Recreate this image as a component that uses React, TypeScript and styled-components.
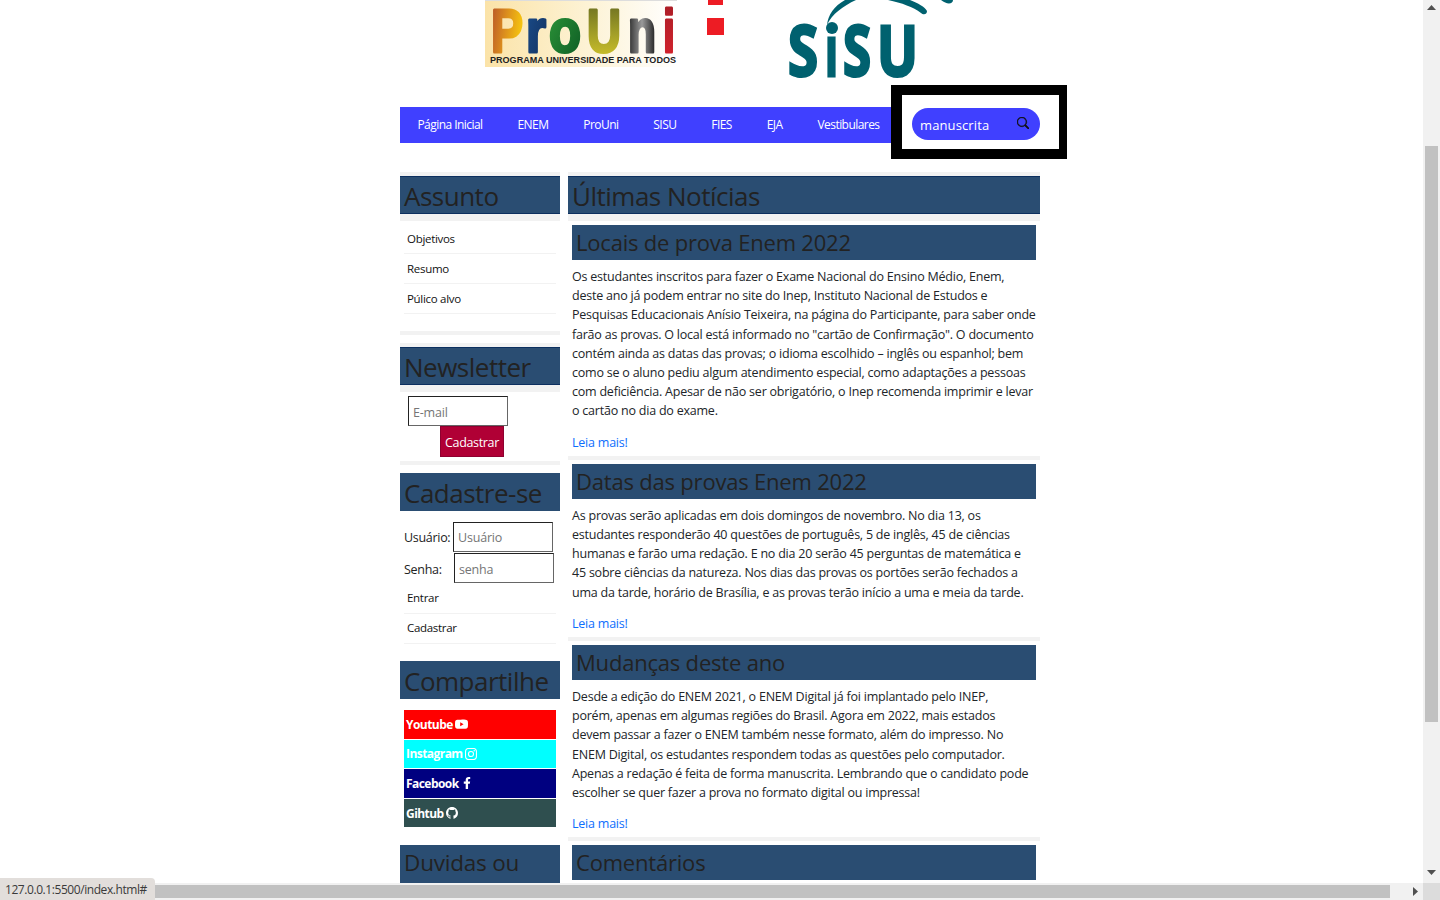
import React from 'react';
import styled, {createGlobalStyle} from 'styled-components';
import {BsGithub, BsInstagram, BsSearch, BsYoutube} from 'react-icons/bs';
import {FaFacebookF} from 'react-icons/fa';

const FONT = '"Open Sans", "Noto Sans", sans-serif';
const STRIP = '#f2f2f2';

const GlobalStyle = createGlobalStyle`
  html, body {
    margin: 0;
    height: 100%;
    overflow: hidden;
    background: #fff;
  }
  * {
    box-sizing: border-box;
  }
`;

const Viewport = styled.div`
  position: relative;
  width: 1440px;
  height: 900px;
  overflow: hidden;
  font-family: ${FONT};
  color: #212529;
`;

const Page = styled.div`
  width: 640px;
  margin-left: 400px;
`;

const LogoRow = styled.div`
  display: flex;
  align-items: flex-start;
  height: 85px;
  padding-left: 85px;
`;

const RedMarks = styled.svg`
  margin-left: 29px;
  flex: none;
`;

const SisuLogo = styled.svg`
  margin-left: 64px;
  flex: none;
`;

const NavRow = styled.div`
  display: flex;
  align-items: flex-start;
  height: 74px;
  margin-bottom: 13px;
`;

const NavBar = styled.nav`
  display: flex;
  flex: none;
  width: 491px;
  height: 36px;
  margin-top: 22px;
  background: #4040ff;
`;

const NavLink = styled.a`
  padding: 0 17.45px;
  font-size: 12px;
  line-height: 36px;
  letter-spacing: -0.55px;
  color: #fff;
  white-space: nowrap;
`;

const SearchFrame = styled.div`
  flex: none;
  width: 176px;
  height: 74px;
  padding: 13px 0 0 10px;
  border: solid #000;
  border-width: 10px 8px 10px 11px;
  background: #fff;
`;

const SearchPill = styled.div`
  display: flex;
  align-items: center;
  width: 128px;
  height: 32px;
  padding: 0 10px 0 8px;
  border-radius: 16px;
  background: #4040ff;
  color: #111;
  svg {
    margin: -3px 0 0 5px;
    stroke: currentColor;
    stroke-width: 0.7;
  }
`;

const SearchInput = styled.input`
  width: 92px;
  padding: 2px 0 0;
  border: 0;
  outline: 0;
  background: transparent;
  font-family: ${FONT};
  font-size: 13px;
  letter-spacing: 0.12px;
  color: #fff;
`;

const Columns = styled.div`
  display: grid;
  grid-template-columns: 160px 472px;
  gap: 8px;
  align-items: start;
`;

const Strip = styled.div`
  height: 4px;
  background: ${STRIP};
`;

const Heading = styled.h2<{$top?: number}>`
  height: 38px;
  margin: ${(p) => p.$top || 0}px 0 0;
  padding: 0 4px;
  background: #2a4d72;
  border-top: 1px solid #0c2f5f;
  border-bottom: 1px solid #0c2f5f;
  font-size: 26px;
  font-weight: 400;
  line-height: 38px;
  letter-spacing: -0.5px;
  color: #222;
  white-space: nowrap;
`;

const PlainHeading = styled(Heading)`
  border: 0;
  line-height: 40px;
`;

const DoubtHeading = styled(PlainHeading)`
  font-size: 22.5px;
  line-height: 36px;
  letter-spacing: -0.2px;
`;

const HeadingGap = styled.div`
  height: 7px;
  background: ${STRIP};
`;

const LinkList = styled.ul<{$top: number; $bottom: number}>`
  margin: ${(p) => p.$top}px 4px ${(p) => p.$bottom}px;
  padding: 0;
  list-style: none;
`;

const LinkItem = styled.li<{$line?: number}>`
  height: 30px;
  padding-left: 3px;
  border-bottom: 1px solid ${STRIP};
  font-size: 11.5px;
  line-height: ${(p) => p.$line ?? 29}px;
  letter-spacing: -0.3px;
  color: #111;
`;

const Spacer = styled.div<{$h: number}>`
  height: ${(p) => p.$h}px;
`;

const TextInput = styled.input<{$pad?: number}>`
  display: block;
  width: 100px;
  height: 30px;
  padding: ${(p) => p.$pad ?? 0}px 4px 0;
  border: 1px solid;
  border-color: #222 #666 #666 #222;
  background: #fff;
  font-family: ${FONT};
  font-size: 12.5px;
  letter-spacing: -0.2px;
  &::placeholder {
    color: #757575;
    opacity: 1;
  }
`;

const NewsletterForm = styled.form`
  margin: 4px 0 4px 8px;
`;

const SubmitButton = styled.button`
  display: block;
  width: 64px;
  height: 31px;
  margin-left: 32px;
  padding: 2px 0 0;
  border: 1px solid #8f0030;
  background: #b00035;
  font-family: ${FONT};
  font-size: 12.5px;
  letter-spacing: -0.35px;
  color: #fff;
`;

const LoginForm = styled.form`
  margin: 11px 0 0 4px;
`;

const LoginRow = styled.div`
  display: flex;
  align-items: center;
  margin-bottom: 1px;
`;

const LoginLabel = styled.label<{$width: number; $pad?: number}>`
  width: ${(p) => p.$width}px;
  padding-top: ${(p) => p.$pad ?? 0}px;
  font-size: 12.5px;
  letter-spacing: -0.3px;
  color: #222;
`;

const SocialList = styled.div`
  display: flex;
  flex-direction: column;
  gap: 1px;
  width: 152px;
  margin: 11px 0 18px 4px;
`;

const SocialLink = styled.a<{$bg: string}>`
  display: flex;
  align-items: center;
  gap: 2px;
  height: 28.6px;
  padding-left: 2px;
  background: ${(p) => p.$bg};
  font-size: 12px;
  font-weight: 700;
  letter-spacing: -0.55px;
  color: #fff;
`;

const Article = styled.article`
  padding: 4px 4px 4px;
`;

const ArticleHeading = styled.h3`
  height: 35px;
  margin: 0;
  padding: 0 4px;
  background: #2a4d72;
  font-size: 22px;
  font-weight: 400;
  line-height: 34px;
  letter-spacing: -0.2px;
  color: #222;
  white-space: nowrap;
`;

const ArticleText = styled.p`
  margin: 7px 0 12.2px;
  font-size: 12.5px;
  line-height: 19.2px;
  letter-spacing: -0.22px;
  white-space: nowrap;
  color: #212529;
`;

const ReadMore = styled.a`
  display: block;
  height: 19px;
  font-size: 12.5px;
  line-height: 20px;
  letter-spacing: -0.22px;
  color: #0d6efd;
`;

// browser chrome that sits on top of the page
const VerticalTrack = styled.div`
  position: absolute;
  top: 0;
  right: 0;
  bottom: 0;
  width: 17px;
  background: #f1f1f1;
`;

const VerticalThumb = styled.div`
  position: absolute;
  top: 146px;
  left: 2px;
  width: 13px;
  height: 576px;
  background: #c1c1c1;
`;

const HorizontalTrack = styled.div`
  position: absolute;
  left: 0;
  right: 17px;
  bottom: 0;
  height: 17px;
  background: #f1f1f1;
`;

const HorizontalThumb = styled.div`
  position: absolute;
  top: 2px;
  left: 150px;
  width: 1240px;
  height: 13px;
  background: #c1c1c1;
`;

const Corner = styled.div`
  position: absolute;
  right: 0;
  bottom: 0;
  width: 17px;
  height: 17px;
  background: #dcdcdc;
`;

const Arrow = styled.svg<{$top?: number; $left?: number}>`
  position: absolute;
  top: ${(p) => p.$top ?? 0}px;
  left: ${(p) => p.$left ?? 0}px;
`;

const StatusBubble = styled.div`
  position: absolute;
  left: 0;
  bottom: 0;
  width: 155px;
  height: 22px;
  padding-left: 5px;
  border-top-right-radius: 4px;
  background: #e2dedb;
  font-size: 12px;
  line-height: 23px;
  letter-spacing: -0.43px;
  color: #3a3a3a;
  white-space: nowrap;
`;

const navItems = ['Página Inicial', 'ENEM', 'ProUni', 'SISU', 'FIES', 'EJA', 'Vestibulares'];

const articles = [
    {
        title: 'Locais de prova Enem 2022',
        lines: [
            'Os estudantes inscritos para fazer o Exame Nacional do Ensino Médio, Enem,',
            'deste ano já podem entrar no site do Inep, Instituto Nacional de Estudos e',
            'Pesquisas Educacionais Anísio Teixeira, na página do Participante, para saber onde',
            'farão as provas. O local está informado no "cartão de Confirmação". O documento',
            'contém ainda as datas das provas; o idioma escolhido – inglês ou espanhol; bem',
            'como se o aluno pediu algum atendimento especial, como adaptações a pessoas',
            'com deficiência. Apesar de não ser obrigatório, o Inep recomenda imprimir e levar',
            'o cartão no dia do exame.',
        ],
    },
    {
        title: 'Datas das provas Enem 2022',
        lines: [
            'As provas serão aplicadas em dois domingos de novembro. No dia 13, os',
            'estudantes responderão 40 questões de português, 5 de inglês, 45 de ciências',
            'humanas e farão uma redação. E no dia 20 serão 45 perguntas de matemática e',
            '45 sobre ciências da natureza. Nos dias das provas os portões serão fechados a',
            'uma da tarde, horário de Brasília, e as provas terão início a uma e meia da tarde.',
        ],
    },
    {
        title: 'Mudanças deste ano',
        lines: [
            'Desde a edição do ENEM 2021, o ENEM Digital já foi implantado pelo INEP,',
            'porém, apenas em algumas regiões do Brasil. Agora em 2022, mais estados',
            'devem passar a fazer o ENEM também nesse formato, além do impresso. No',
            'ENEM Digital, os estudantes respondem todas as questões pelo computador.',
            'Apenas a redação é feita de forma manuscrita. Lembrando que o candidato pode',
            'escolher se quer fazer a prova no formato digital ou impressa!',
        ],
    },
];

const ProUniLogo = () => (
    <svg width="192" height="67" viewBox="0 0 192 67">
        <defs>
            <linearGradient id="pu-bg" x1="0" x2="1" y1="0" y2="0">
                <stop offset="0" stopColor="#fbe3a8"/>
                <stop offset="0.55" stopColor="#fdf3d6"/>
                <stop offset="1" stopColor="#ffffff"/>
            </linearGradient>
            <linearGradient id="pu-p" x1="0" x2="1" y1="0" y2="0.3">
                <stop offset="0" stopColor="#b5502a"/>
                <stop offset="0.5" stopColor="#d98a1e"/>
                <stop offset="1" stopColor="#f6c40f"/>
            </linearGradient>
            <linearGradient id="pu-r" x1="0" x2="1" y1="0" y2="1">
                <stop offset="0" stopColor="#1b4f8f"/>
                <stop offset="1" stopColor="#12305e"/>
            </linearGradient>
            <linearGradient id="pu-o" x1="0" x2="1" y1="0" y2="1">
                <stop offset="0" stopColor="#2f9a3a"/>
                <stop offset="1" stopColor="#0d5a24"/>
            </linearGradient>
            <linearGradient id="pu-u" x1="0" x2="0" y1="0" y2="1">
                <stop offset="0" stopColor="#5f6420"/>
                <stop offset="0.6" stopColor="#a9a428"/>
                <stop offset="1" stopColor="#d8c92a"/>
            </linearGradient>
            <linearGradient id="pu-n" x1="0" x2="1" y1="0" y2="0">
                <stop offset="0" stopColor="#2a2a2a"/>
                <stop offset="0.5" stopColor="#9a9a9a"/>
                <stop offset="1" stopColor="#1c1c1c"/>
            </linearGradient>
            <linearGradient id="pu-i" x1="0" x2="0" y1="0" y2="1">
                <stop offset="0" stopColor="#a51c24"/>
                <stop offset="1" stopColor="#d8232d"/>
            </linearGradient>
        </defs>
        <rect width="192" height="67" fill="url(#pu-bg)"/>
        <rect width="192" height="1" fill="#dddddd"/>
        <g fontFamily='"Liberation Sans", sans-serif' fontWeight="700" fontSize="62" strokeWidth="3" strokeLinejoin="round">
            <text x="6" y="52" textLength="32" lengthAdjust="spacingAndGlyphs" fill="url(#pu-p)" stroke="url(#pu-p)">P</text>
            <text x="41" y="52" textLength="20" lengthAdjust="spacingAndGlyphs" fill="url(#pu-r)" stroke="url(#pu-r)">r</text>
            <text x="64" y="52" textLength="32" lengthAdjust="spacingAndGlyphs" fill="url(#pu-o)" stroke="url(#pu-o)">o</text>
            <text x="102" y="52" textLength="34" lengthAdjust="spacingAndGlyphs" fill="url(#pu-u)" stroke="url(#pu-u)">U</text>
            <text x="143" y="52" textLength="28" lengthAdjust="spacingAndGlyphs" fill="url(#pu-n)" stroke="url(#pu-n)">n</text>
            <text x="178" y="52" textLength="12" lengthAdjust="spacingAndGlyphs" fill="url(#pu-i)" stroke="url(#pu-i)">i</text>
        </g>
        <text x="5" y="63" textLength="186" lengthAdjust="spacingAndGlyphs" fontFamily='"Liberation Sans", sans-serif'
              fontWeight="700" fontSize="9" fill="#222">PROGRAMA UNIVERSIDADE PARA TODOS</text>
    </svg>
);

const Sisu = () => (
    <SisuLogo width="170" height="80" viewBox="0 0 170 80">
        <g fontFamily='"Open Sans", sans-serif' fontWeight="700" fontSize="70" fill="#00616f" stroke="#00616f" strokeWidth="3">
            <text x="0" y="76" textLength="30" lengthAdjust="spacingAndGlyphs">S</text>
            <text x="37" y="76" textLength="13" lengthAdjust="spacingAndGlyphs">ı</text>
            <text x="55" y="76" textLength="28" lengthAdjust="spacingAndGlyphs">S</text>
            <text x="89" y="76" textLength="41" lengthAdjust="spacingAndGlyphs">U</text>
        </g>
        <circle cx="44" cy="28" r="6" fill="#00616f"/>
        <path fill="#00616f" d="M39 25 C40 15 46 6 57 0 L68 0 C55 6 44 14 39 25 Z"/>
        <path fill="#00616f" d="M100 0 L122 0 C130 3 137 7 139 11 C139 15 135 15 133 13 C125 7 114 3 100 0 Z"/>
        <path fill="#00616f" d="M153 0 L165 0 C165 4 159 5 153 0 Z"/>
    </SisuLogo>
);

const ScrollArrow = ({points, top, left}: {points: string, top: number, left: number}) => (
    <Arrow width="9" height="9" viewBox="0 0 9 9" $top={top} $left={left}>
        <polygon points={points} fill="#505050"/>
    </Arrow>
);

export default function App() {
    return (
        <Viewport>
            <GlobalStyle/>
            <Page>
                <LogoRow>
                    <ProUniLogo/>
                    <RedMarks width="18" height="36" viewBox="0 0 18 36">
                        <rect x="2" y="0" width="15" height="5" fill="#ed1c24"/>
                        <rect x="1" y="18" width="17" height="17" fill="#ed1c24"/>
                    </RedMarks>
                    <Sisu/>
                </LogoRow>
                <NavRow>
                    <NavBar>
                        {navItems.map((item) => <NavLink key={item}>{item}</NavLink>)}
                    </NavBar>
                    <SearchFrame>
                        <SearchPill>
                            <SearchInput defaultValue="manuscrita"/>
                            <BsSearch size={12}/>
                        </SearchPill>
                    </SearchFrame>
                </NavRow>
                <Columns>
                    <aside>
                        <Strip/>
                        <Heading>Assunto</Heading>
                        <HeadingGap/>
                        <LinkList $top={3} $bottom={17}>
                            <LinkItem>Objetivos</LinkItem>
                            <LinkItem>Resumo</LinkItem>
                            <LinkItem>Púlico alvo</LinkItem>
                        </LinkList>
                        <Strip/>
                        <Spacer $h={8}/>
                        <Strip/>
                        <Heading>Newsletter</Heading>
                        <HeadingGap/>
                        <NewsletterForm>
                            <TextInput $pad={2} placeholder="E-mail"/>
                            <SubmitButton type="button">Cadastrar</SubmitButton>
                        </NewsletterForm>
                        <Strip/>
                        <PlainHeading $top={8}>Cadastre-se</PlainHeading>
                        <LoginForm>
                            <LoginRow>
                                <LoginLabel $width={49}>Usuário:</LoginLabel>
                                <TextInput placeholder="Usuário"/>
                            </LoginRow>
                            <LoginRow>
                                <LoginLabel $width={50} $pad={2}>Senha:</LoginLabel>
                                <TextInput $pad={2} placeholder="senha"/>
                            </LoginRow>
                        </LoginForm>
                        <LinkList $top={0} $bottom={17}>
                            <LinkItem $line={28}>Entrar</LinkItem>
                            <LinkItem $line={27}>Cadastrar</LinkItem>
                        </LinkList>
                        <PlainHeading>Compartilhe</PlainHeading>
                        <SocialList>
                            <SocialLink $bg="#ff0000">Youtube <BsYoutube size={13}/></SocialLink>
                            <SocialLink $bg="#00ffff">Instagram <BsInstagram size={12}/></SocialLink>
                            <SocialLink $bg="#000080">Facebook <FaFacebookF size={12}/></SocialLink>
                            <SocialLink $bg="#2f4f4f">Gihtub <BsGithub size={12}/></SocialLink>
                        </SocialList>
                        <DoubtHeading>Duvidas ou<br/>Comentários</DoubtHeading>
                    </aside>
                    <main>
                        <Strip/>
                        <Heading>Últimas Notícias</Heading>
                        <HeadingGap/>
                        {articles.map((article) => (
                            <React.Fragment key={article.title}>
                                <Article>
                                    <ArticleHeading>{article.title}</ArticleHeading>
                                    <ArticleText>
                                        {article.lines.map((line) => <React.Fragment key={line}>{line}<br/></React.Fragment>)}
                                    </ArticleText>
                                    <ReadMore>Leia mais!</ReadMore>
                                </Article>
                                <Strip/>
                            </React.Fragment>
                        ))}
                        <Article>
                            <ArticleHeading>Comentários</ArticleHeading>
                        </Article>
                    </main>
                </Columns>
            </Page>
            <VerticalTrack>
                <ScrollArrow points="4.5,2 9,7 0,7" top={3} left={4}/>
                <VerticalThumb/>
                <ScrollArrow points="0,2 9,2 4.5,7" top={868} left={4}/>
            </VerticalTrack>
            <HorizontalTrack>
                <HorizontalThumb/>
                <ScrollArrow points="2,0 7,4.5 2,9" top={4} left={1411}/>
            </HorizontalTrack>
            <Corner/>
            <StatusBubble>127.0.0.1:5500/index.html#</StatusBubble>
        </Viewport>
    );
}
